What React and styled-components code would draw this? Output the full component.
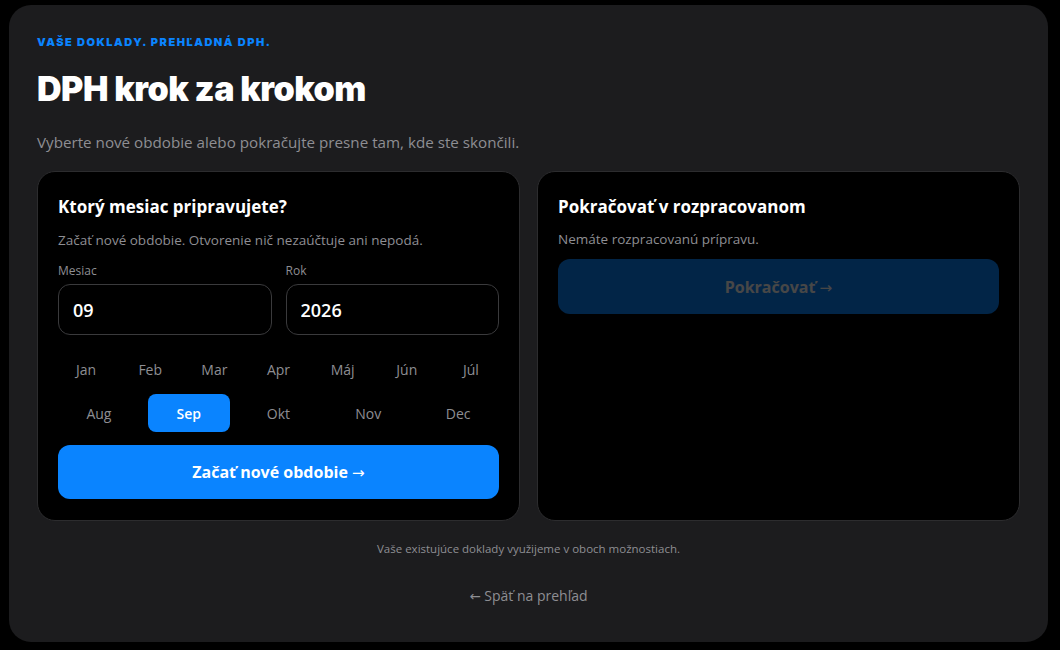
import React, { useState } from "react";
import styled, { createGlobalStyle } from "styled-components";

const Global = createGlobalStyle`
  html, body { margin: 0; padding: 0; background: #000; }
  body { font-family: "Open Sans", "Noto Sans", sans-serif; -webkit-font-smoothing: antialiased; }
  * { box-sizing: border-box; }
`;

const Page = styled.div`
  width: 1060px;
  height: 650px;
  padding: 5px 12px 8px 9px;
  background: #000;
`;

const Panel = styled.main`
  height: 100%;
  background: #1c1c1e;
  border-radius: 22px;
  padding: 30px 28px 0 28px;
  display: flex;
  flex-direction: column;
`;

const Eyebrow = styled.div`
  font-family: "Inter", sans-serif;
  font-weight: 900;
  font-size: 11px;
  letter-spacing: 1.5px;
  color: #0a84ff;
  text-transform: uppercase;
  line-height: 14px;
`;

const Title = styled.h1`
  margin: 18px 0 0;
  font-family: "Inter", sans-serif;
  font-weight: 900;
  font-size: 34px;
  line-height: 44px;
  color: #fff;
  letter-spacing: -0.5px;
`;

const Subtitle = styled.p`
  margin: 20px 0 0;
  font-size: 15.2px;
  line-height: 22px;
  color: #8e8e93;
`;

const Cards = styled.div`
  margin-top: 18px;
  display: grid;
  grid-template-columns: minmax(0, 1fr) minmax(0, 1fr);
  gap: 17px;
`;

const Card = styled.section`
  background: #000;
  border: 1px solid #2c2c2e;
  border-radius: 18px;
  padding: 23px 20px 21px;
  min-height: 348px;
  display: flex;
  flex-direction: column;
`;

const CardTitle = styled.h2`
  margin: 0;
  font-size: 17px;
  font-weight: 700;
  line-height: 24px;
  color: #fff;
`;

const CardText = styled.p`
  margin: ${(p) => p.$mt ?? 11}px 0 0;
  font-size: 13.5px;
  line-height: 20px;
  color: #8e8e93;
`;

const Fields = styled.div`
  margin-top: 13px;
  display: grid;
  grid-template-columns: minmax(0, 1fr) minmax(0, 1fr);
  gap: 14px;
`;

const Field = styled.label`
  display: flex;
  flex-direction: column;
  gap: 5px;
`;

const Label = styled.span`
  font-size: 12px;
  line-height: 16px;
  color: #8e8e93;
`;

const Input = styled.input`
  width: 100%;
  min-width: 0;
  height: 51px;
  border-radius: 12px;
  border: 1px solid #3a3a3c;
  background: #000;
  color: #fff;
  font-family: inherit;
  font-size: 18px;
  font-weight: 600;
  padding: 0 14px;
  outline: none;
`;

const Months = styled.div`
  margin-top: 15px;
  display: flex;
  flex-wrap: wrap;
  gap: 6px 8px;
`;

const Month = styled.button`
  flex: 1 0 calc((100% - 48px) / 7);
  height: 38px;
  border: 0;
  border-radius: 8px;
  background: ${(p) => (p.$active ? "#0a84ff" : "transparent")};
  color: ${(p) => (p.$active ? "#fff" : "#8e8e93")};
  font-family: inherit;
  font-size: 14px;
  font-weight: ${(p) => (p.$active ? 600 : 500)};
  cursor: pointer;
`;

const Primary = styled.button`
  margin-top: ${(p) => p.$mt || 0}px;
  height: ${(p) => p.$h || 54}px;
  width: 100%;
  border: 0;
  border-radius: 12px;
  background: #0a84ff;
  color: #fff;
  font-family: inherit;
  font-size: 16px;
  font-weight: 700;
  opacity: ${(p) => (p.disabled ? 0.28 : 1)};
  cursor: ${(p) => (p.disabled ? "default" : "pointer")};
`;

const Arrow = styled.span`
  font-family: "DejaVu Sans", sans-serif;
  font-weight: 400;
  font-size: 0.95em;
`;

const Note = styled.p`
  margin: 20px 0 0;
  text-align: center;
  font-size: 11.5px;
  line-height: 16px;
  color: #8e8e93;
`;

const Back = styled.a`
  margin-top: 29px;
  align-self: center;
  font-size: 14px;
  line-height: 20px;
  color: #8e8e93;
  text-decoration: none;
  cursor: pointer;
`;

const MONTHS = ["Jan", "Feb", "Mar", "Apr", "Máj", "Jún", "Júl", "Aug", "Sep", "Okt", "Nov", "Dec"];

export default function App() {
  const [month, setMonth] = useState(8);
  return (
    <Page>
      <Global />
      <Panel>
        <Eyebrow>Vaše doklady. Prehľadná DPH.</Eyebrow>
        <Title>DPH krok za krokom</Title>
        <Subtitle>Vyberte nové obdobie alebo pokračujte presne tam, kde ste skončili.</Subtitle>
        <Cards>
          <Card>
            <CardTitle>Ktorý mesiac pripravujete?</CardTitle>
            <CardText>Začať nové obdobie. Otvorenie nič nezaúčtuje ani nepodá.</CardText>
            <Fields>
              <Field>
                <Label>Mesiac</Label>
                <Input value={String(month + 1).padStart(2, "0")} readOnly />
              </Field>
              <Field>
                <Label>Rok</Label>
                <Input value="2026" readOnly />
              </Field>
            </Fields>
            <Months>
              {MONTHS.map((m, i) => (
                <Month key={m} $active={i === month} onClick={() => setMonth(i)}>
                  {m}
                </Month>
              ))}
            </Months>
            <Primary $mt={13}>
              Začať nové obdobie <Arrow>→</Arrow>
            </Primary>
          </Card>
          <Card>
            <CardTitle>Pokračovať v rozpracovanom</CardTitle>
            <CardText $mt={10}>Nemáte rozpracovanú prípravu.</CardText>
            <Primary $mt={10} $h={55} disabled>
              Pokračovať <Arrow>→</Arrow>
            </Primary>
          </Card>
        </Cards>
        <Note>Vaše existujúce doklady využijeme v oboch možnostiach.</Note>
        <Back>
          <Arrow>←</Arrow> Späť na prehľad
        </Back>
      </Panel>
    </Page>
  );
}
